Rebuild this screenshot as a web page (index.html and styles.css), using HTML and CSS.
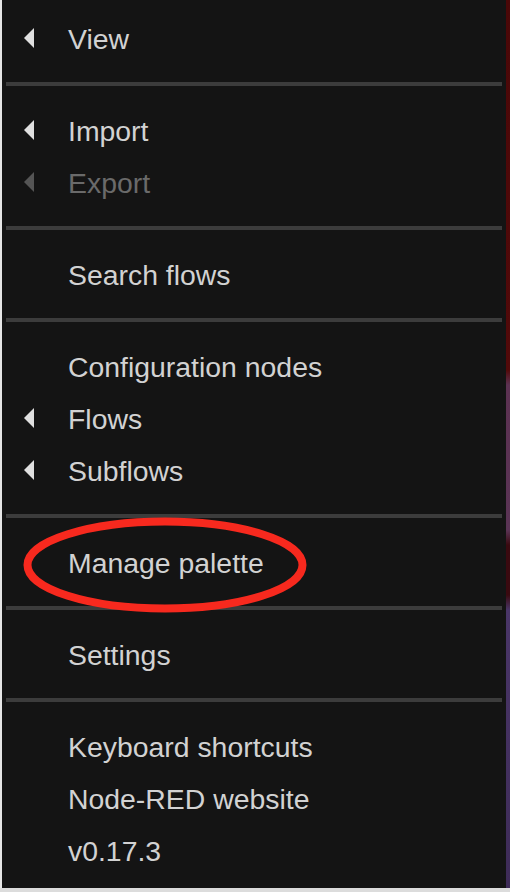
FILE: index.html
```html
<!DOCTYPE html>
<html>
<head>
<meta charset="utf-8">
<link rel="stylesheet" href="styles.css">
</head>
<body>
<div class="screen">
  <div class="left-strip"></div>
  <div class="menu">
    <div class="item"><span class="arrow"></span>View</div>
    <div class="divider"></div>
    <div class="item"><span class="arrow"></span>Import</div>
    <div class="item disabled"><span class="arrow"></span>Export</div>
    <div class="divider"></div>
    <div class="item">Search flows</div>
    <div class="divider"></div>
    <div class="item">Configuration nodes</div>
    <div class="item"><span class="arrow"></span>Flows</div>
    <div class="item"><span class="arrow"></span>Subflows</div>
    <div class="divider"></div>
    <div class="item">Manage palette<svg class="ring" width="300" height="100" viewBox="0 0 300 100"><ellipse cx="146" cy="51" rx="137.5" ry="43.5" fill="none" stroke="#f7291e" stroke-width="8"/></svg></div>
    <div class="divider"></div>
    <div class="item">Settings</div>
    <div class="divider"></div>
    <div class="item">Keyboard shortcuts</div>
    <div class="item">Node-RED website</div>
    <div class="item">v0.17.3</div>
  </div>
  <div class="right-strip"></div>
</div>
</body>
</html>
```
FILE: styles.css
```css
html, body {
  margin: 0;
  padding: 0;
}
body {
  width: 510px;
  height: 892px;
  background: #dcdcdc;
  overflow: hidden;
}
.screen {
  display: flex;
  height: 888px;
}
.left-strip {
  width: 2px;
  background: #e6e6e6;
}
.right-strip {
  width: 4px;
  background: linear-gradient(180deg,
    #4a0808 0px, #520a0a 370px,
    #5c3252 385px, #5a3455 530px,
    #3a0a10 545px, #3a0a10 595px,
    #4a3668 610px, #3e2c58 888px);
}
.menu {
  width: 504px;
  background: #141414;
  padding-top: 12px;
  box-sizing: border-box;
  font-family: "Liberation Sans", Arial, sans-serif;
  font-size: 28.4px;
  color: #d2d2d2;
}
.item {
  position: relative;
  height: 49px;
  line-height: 49px;
  padding-top: 3px;
  padding-left: 66px;
}
.arrow {
  position: absolute;
  left: 22px;
  top: 16px;
  width: 0;
  height: 0;
  border-top: 10px solid transparent;
  border-bottom: 10px solid transparent;
  border-right: 10px solid #e0e0e0;
}
.disabled {
  color: #6a6a6a;
}
.disabled .arrow {
  border-right-color: #555;
}
.divider {
  height: 4px;
  margin: 18px 4px;
  background: #3c3c3c;
}
.ring {
  position: absolute;
  left: 17px;
  top: -22px;
  pointer-events: none;
}
```
